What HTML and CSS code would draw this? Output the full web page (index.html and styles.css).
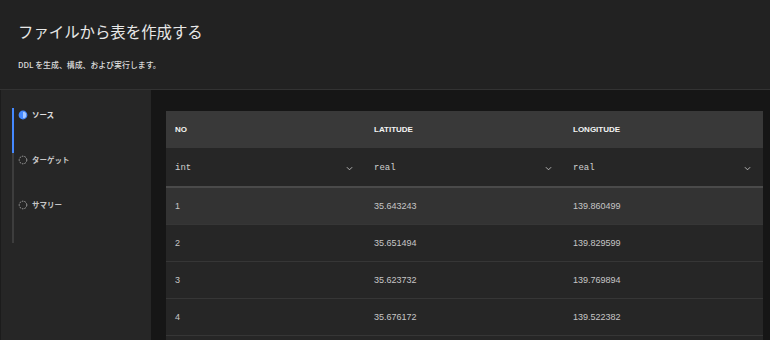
FILE: index.html
```html
<!DOCTYPE html>
<html lang="ja">
<head>
<meta charset="utf-8">
<title>ファイルから表を作成する</title>
<link rel="stylesheet" href="styles.css">
</head>
<body>
<header class="page-header">
  <h1 class="title">ファイルから表を作成する</h1>
  <p class="subtitle">DDL を生成、構成、および実行します。</p>
</header>
<div class="layout">
  <nav class="sidebar">
    <ul class="steps">
      <li class="step active">
        <svg class="step-icon" viewBox="0 0 10 10" width="10" height="10"><circle cx="5" cy="5" r="3.8" fill="#a6c8ff" stroke="#4589ff" stroke-width="1.2"/><path d="M5 1.2 A3.8 3.8 0 0 0 5 8.8 Z" fill="#4589ff"/></svg>
        <span class="step-label">ソース</span>
      </li>
      <li class="step">
        <svg class="step-icon" viewBox="0 0 10 10" width="10" height="10"><circle cx="5" cy="5" r="3.8" fill="none" stroke="#a8a8a8" stroke-width="1" stroke-dasharray="1.6 1.1"/></svg>
        <span class="step-label">ターゲット</span>
      </li>
      <li class="step">
        <svg class="step-icon" viewBox="0 0 10 10" width="10" height="10"><circle cx="5" cy="5" r="3.8" fill="none" stroke="#a8a8a8" stroke-width="1" stroke-dasharray="1.6 1.1"/></svg>
        <span class="step-label">サマリー</span>
      </li>
    </ul>
  </nav>
  <main class="content">
    <table class="grid">
      <thead>
        <tr class="head-row"><th>NO</th><th>LATITUDE</th><th>LONGITUDE</th></tr>
        <tr class="type-row">
          <td><div class="type-select"><span>int</span><svg class="chev" viewBox="0 0 8 5" width="7" height="5"><path d="M1 1 L4 4 L7 1" fill="none" stroke="#c6c6c6" stroke-width="1"/></svg></div></td>
          <td><div class="type-select"><span>real</span><svg class="chev" viewBox="0 0 8 5" width="7" height="5"><path d="M1 1 L4 4 L7 1" fill="none" stroke="#c6c6c6" stroke-width="1"/></svg></div></td>
          <td><div class="type-select"><span>real</span><svg class="chev" viewBox="0 0 8 5" width="7" height="5"><path d="M1 1 L4 4 L7 1" fill="none" stroke="#c6c6c6" stroke-width="1"/></svg></div></td>
        </tr>
      </thead>
      <tbody>
        <tr class="data-row hover"><td>1</td><td>35.643243</td><td>139.860499</td></tr>
        <tr class="data-row"><td>2</td><td>35.651494</td><td>139.829599</td></tr>
        <tr class="data-row"><td>3</td><td>35.623732</td><td>139.769894</td></tr>
        <tr class="data-row"><td>4</td><td>35.676172</td><td>139.522382</td></tr>
        <tr class="data-row"><td></td><td></td><td></td></tr>
      </tbody>
    </table>
  </main>
</div>
</body>
</html>
```
FILE: styles.css
```css
* { box-sizing: border-box; }
html, body { margin: 0; padding: 0; }
body {
  width: 770px;
  height: 340px;
  overflow: hidden;
  background: #262626;
  font-family: "Noto Sans", "Noto Sans CJK JP", sans-serif;
  color: #f4f4f4;
}
.page-header {
  height: 90px;
  background: #222222;
  border-bottom: 1px solid #333333;
  padding: 20px 0 0 18px;
}
.title {
  margin: 0;
  font-family: "Noto Sans CJK JP", sans-serif;
  font-size: 15.4px;
  font-weight: 400;
  line-height: 22px;
  color: #e8e8e8;
}
.subtitle {
  margin: 18px 0 0;
  font-family: "Noto Sans CJK JP", sans-serif;
  font-size: 7.9px;
  font-weight: 500;
  line-height: 10px;
  color: #dcdcdc;
}
.layout {
  display: flex;
  height: 250px;
}
.sidebar {
  width: 151px;
  flex: none;
  background: #262626;
  padding-top: 18px;
  border-left: 1px solid #1c1c1c;
}
.steps {
  list-style: none;
  margin: 0 0 0 11px;
  padding: 0;
}
.step {
  height: 45px;
  border-left: 2px solid #3d3d3d;
  padding: 2px 0 0 4px;
  display: flex;
  align-items: flex-start;
  gap: 4px;
}
.step.active { border-left-color: #4589ff; }
.step-icon { flex: none; display: block; }
.step-label {
  font-family: "Noto Sans CJK JP", sans-serif;
  font-size: 7.5px;
  font-weight: 700;
  line-height: 10px;
  color: #c6c6c6;
}
.step.active .step-label { color: #e0e0e0; }
.content {
  flex: 1;
  background: #161616;
  padding: 21px 8px 0 15px;
  overflow: hidden;
}
.grid {
  width: 597px;
  border-collapse: collapse;
  table-layout: fixed;
  background: #262626;
}
.grid th, .grid td {
  height: 37px;
  padding: 0 0 0 9px;
  text-align: left;
  vertical-align: middle;
}
.head-row th {
  background: #393939;
  font-family: "Liberation Sans", sans-serif;
  font-size: 8px;
  font-weight: 700;
  color: #f4f4f4;
}
.type-row td {
  height: 39px;
  padding-top: 2px;
  background: #262626;
  border-bottom: 2px solid #4a4a4a;
  padding-right: 12px;
}
.type-select {
  display: flex;
  align-items: center;
  justify-content: space-between;
  font-family: "Liberation Mono", monospace;
  font-size: 9px;
  color: #d0d0d0;
}
.chev { display: block; }
.data-row td {
  border-top: 1px solid #363636;
  font-family: "Liberation Sans", sans-serif;
  font-size: 9px;
  color: #c6c6c6;
}
.data-row.hover td { background: #333333; border-top: none; }
```
